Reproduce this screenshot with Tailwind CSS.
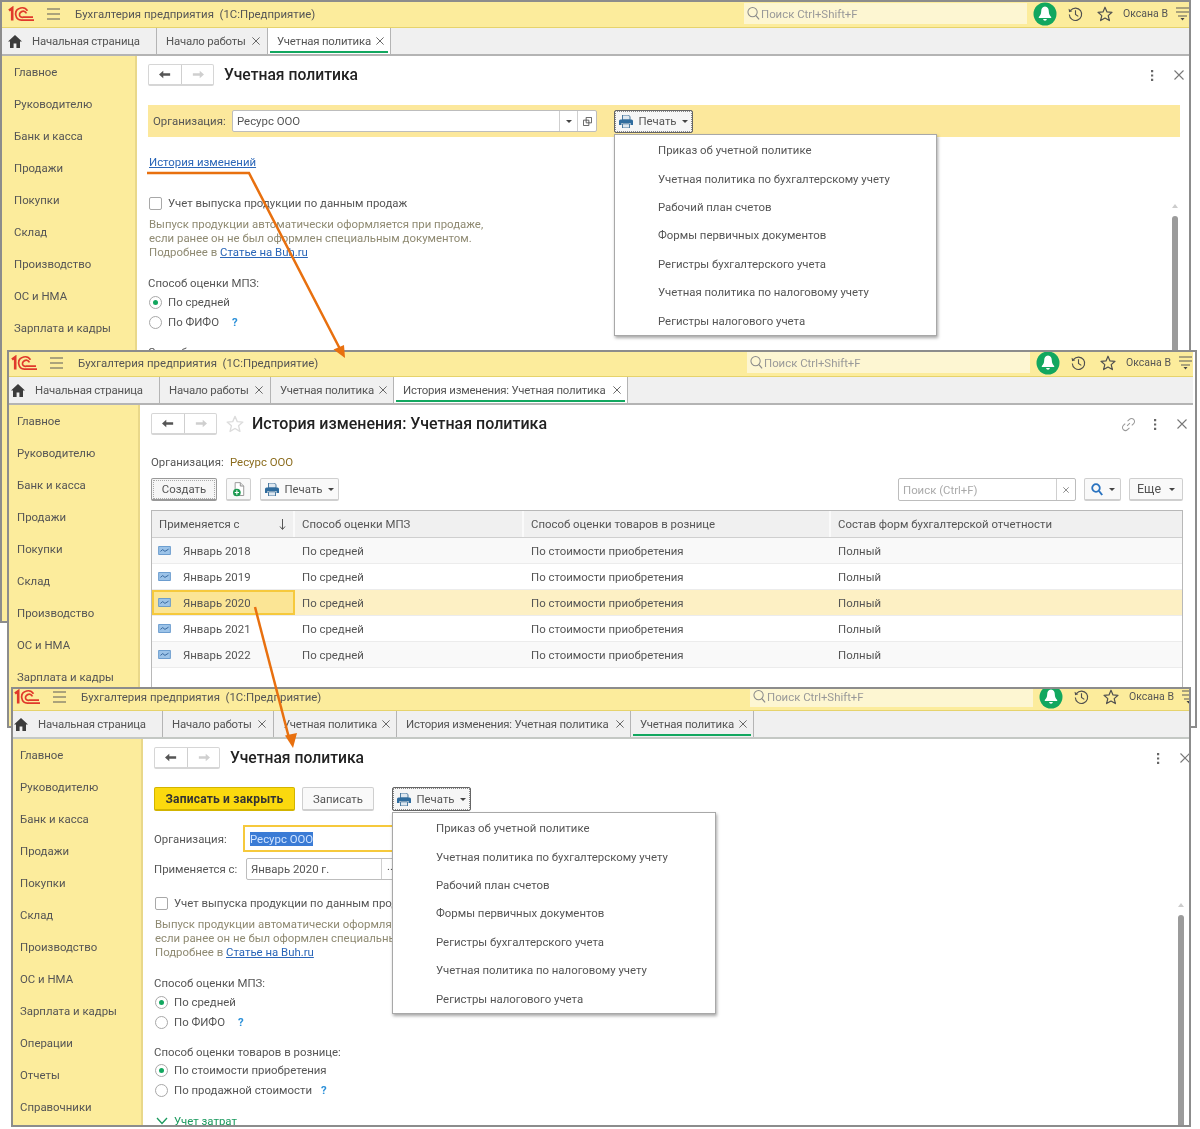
<!DOCTYPE html>
<html lang="ru">
<head>
<meta charset="UTF-8">
<title>Учетная политика</title>
<script src="https://cdn.jsdelivr.net/npm/@tailwindcss/browser@4"></script>
</head>
<body class="bg-white">

<!-- общие иконки -->
<svg class="hidden">
  <symbol id="logo" viewBox="0 0 26 16">
    <path d="M1 4.5 4.2 2.2V14.5" fill="none" stroke="#e0392b" stroke-width="2.6"/>
    <path d="M19.5 4.8C18 2.4 15 1.4 12.6 2 8.8 3 7.2 6 7.8 9.2 8.4 12.4 11 14.4 14 14.2H26" fill="none" stroke="#e0392b" stroke-width="1.7"/>
    <path d="M18.5 7.4C17.3 5.4 15 5 13.6 5.6 11.4 6.6 11 9 12 10.3 13 11.6 14.4 11.4 15.4 11.2H25" fill="none" stroke="#e0392b" stroke-width="1.7"/>
  </symbol>
  <symbol id="menu" viewBox="0 0 14 12">
    <path d="M0 1h13M0 6h13M0 11h13" stroke="#5a5a5a" stroke-width="1.2"/>
  </symbol>
  <symbol id="menu-down" viewBox="0 0 14 14">
    <path d="M0 1h13M0 5h13M2 9h9" stroke="#5a5a5a" stroke-width="1.2"/><path d="M4.5 11h4L6.5 13.5z" fill="#444"/>
  </symbol>
  <symbol id="home" viewBox="0 0 14 13">
    <path d="M7 0 0 6.5h2V13h3.6V8.6h2.8V13H12V6.500h2z" fill="#3c3c3c"/>
  </symbol>
  <symbol id="loupe" viewBox="0 0 14 15">
    <circle cx="6" cy="6" r="5" fill="none" stroke="#8a8a8a" stroke-width="1.1"/><path d="m9.600 9.800 3.400 4" stroke="#8a8a8a" stroke-width="1.3"/>
  </symbol>
  <symbol id="bell" viewBox="0 0 24 24">
    <circle cx="12" cy="12" r="11.500" fill="#12a75f"/>
    <path d="M12 4.500c-2.600 0-3.800 2.200-3.800 4.800 0 3-1.200 4.500-2.400 5.800v.9h12.400v-.9c-1.200-1.300-2.400-2.800-2.400-5.800 0-2.600-1.200-4.800-3.800-4.800z" fill="#fff"/>
    <path d="M10.200 17h3.600c0 2.200-3.600 2.200-3.600 0z" fill="#fff"/>
  </symbol>
  <symbol id="history" viewBox="0 0 16 16">
    <path d="M2.800 4.200A6.600 6.600 0 1 1 1.400 8.500" fill="none" stroke="#4f4f4f" stroke-width="1.200"/>
    <path d="M.6 2.400 1.200 6l3.400-1z" fill="#4f4f4f"/><path d="M8 4v4.500l3 2" fill="none" stroke="#4f4f4f" stroke-width="1.200"/>
  </symbol>
  <symbol id="star" viewBox="0 0 16 16">
    <path d="m8 1.200 2 4.700 5 .4-3.800 3.300 1.200 5L8 12l-4.400 2.600 1.200-5L1 6.300l5-.4z" fill="none" stroke="currentColor" stroke-width="1.200" stroke-linejoin="round"/>
  </symbol>
  <symbol id="back" viewBox="0 0 14 10">
    <path d="M0 5 5 .5v3h8v3H5v3z" fill="currentColor"/>
  </symbol>
  <symbol id="forward" viewBox="0 0 14 10">
    <path d="M14 5 9 .5v3H1v3h8v3z" fill="currentColor"/>
  </symbol>
  <symbol id="close" viewBox="0 0 10 10">
    <path d="m.5.5 9 9m0-9-9 9" stroke="currentColor" stroke-width="1.100"/>
  </symbol>
  <symbol id="dots" viewBox="0 0 3 11">
    <path d="M0 0h2.200v2.200H0zM0 4.400h2.200v2.200H0zM0 8.800h2.200V11H0z" fill="#666"/>
  </symbol>
  <symbol id="printer" viewBox="0 0 14 13">
    <path d="M3.500 0h6L11 1.800V5H3.500z" fill="#dfe8f0" stroke="#3b6d96" stroke-width=".9"/>
    <path d="M1.500 4.500h11A1.500 1.500 0 0 1 14 6v4h-2.500V8h-9v2H0V6a1.500 1.500 0 0 1 1.500-1.500z" fill="#2f6c9e"/>
    <path d="M3.500 8.800h7V13h-7z" fill="#dfe8f0" stroke="#3b6d96" stroke-width=".9"/>
  </symbol>
  <symbol id="copy" viewBox="0 0 10 10">
    <path d="M3.500.5h6v6h-6zM.5 3.500h6v6h-6z" fill="#fff" stroke="#555"/>
  </symbol>
  <symbol id="wave" viewBox="0 0 14 10">
    <path d="M.5.500h13v9H.5z" fill="#9cc3e8" stroke="#5c93c9"/>
    <path d="m2.500 6 2.500-2 2.500 2 4-2.500" fill="none" stroke="#2d5f96" stroke-width="1"/>
  </symbol>
  <symbol id="doc-plus" viewBox="0 0 14 17">
    <path d="M2.500.5h6l4 4v11h-10z" fill="#fff" stroke="#8a8a8a"/><path d="M8.500.5v4h4" fill="#dfdfdf" stroke="#8a8a8a"/>
    <circle cx="4.500" cy="12" r="4.500" fill="#1c9a50"/><path d="M4.500 9.500v5M2 12h5" stroke="#fff" stroke-width="1.300"/>
  </symbol>
  <symbol id="chain" viewBox="0 0 16 16">
    <path d="m6.500 9.500 3-3M7 4.500l2-2a2.900 2.900 0 0 1 4.500 4.500l-2 2M9 11.500l-2 2A2.900 2.900 0 0 1 2.500 9l2-2" fill="none" stroke="#9a9a9a" stroke-width="1.100"/>
  </symbol>
</svg>

<div class="relative w-[1200px] h-[1129px] overflow-hidden whitespace-nowrap text-[11.4px] leading-[14px] text-[#555] font-['Roboto','Liberation_Sans',Arial,sans-serif] blur-[0.4px]">

  <!-- окно 1 -->
  <section class="absolute left-0 top-0 w-[1191px] h-[623px] border-2 border-[#8c8c8c] bg-white overflow-hidden">
    <div class="w-[1188px] h-[800px] -mt-[2px] flex flex-col">
      <header class="h-[28px] shrink-0 flex items-center bg-[#fcec9c] border-b border-[#e6d36c]">
        <svg class="w-[26px] h-[16px] ml-[6px]"><use href="#logo"/></svg>
        <svg class="w-[14px] h-[12px] ml-[13px]"><use href="#menu"/></svg>
        <span class="ml-[14px] flex-1 whitespace-pre">Бухгалтерия предприятия  (1С:Предприятие)</span>
        <div class="w-[283px] h-[21px] flex items-center bg-[#fdf6d2] text-[#999] pl-[3px]"><svg class="w-[13px] h-[15px] mr-[1px]"><use href="#loupe"/></svg>Поиск Ctrl+Shift+F</div>
        <svg class="w-[24px] h-[24px] ml-[6px]"><use href="#bell"/></svg>
        <svg class="w-[15px] h-[16px] ml-[11px]"><use href="#history"/></svg>
        <svg class="w-[16px] h-[16px] ml-[14px] text-[#4f4f4f]"><use href="#star"/></svg>
        <span class="ml-[10px] w-[53px] text-[10.5px]">Оксана В</span>
        <svg class="w-[14px] h-[14px]"><use href="#menu-down"/></svg>
      </header>
      <nav class="h-[28px] shrink-0 flex bg-[#f0f0f0] border-b-2 border-[#b4b4b4] tracking-[-0.2px]">
        <div class="w-[155px] flex items-center border-r border-[#b4b4b4]"><svg class="w-[14px] h-[13px] ml-[6px]"><use href="#home"/></svg><span class="ml-[10px]">Начальная страница</span></div>
        <div class="w-[111px] flex items-center border-r border-[#b4b4b4] pl-[9px]"><span class="flex-1">Начало работы</span><svg class="w-[8px] h-[8px] mr-[7px]"><use href="#close"/></svg></div>
        <div class="w-[123px] relative flex items-center border-r border-[#b4b4b4] bg-white pl-[9px]"><span class="flex-1">Учетная политика</span><svg class="w-[8px] h-[8px] mr-[6px]"><use href="#close"/></svg><i class="absolute left-[2px] right-[2px] bottom-[1px] h-[2px] bg-[#12a75f]"></i></div>
      </nav>
      <div class="flex-1 flex">
        <aside class="w-[135px] shrink-0 bg-[#fcec9c] border-r-2 border-[#e9d88a] pl-[12px]">
          <div class="h-[32px] flex items-center">Главное</div>
          <div class="h-[32px] flex items-center">Руководителю</div>
          <div class="h-[32px] flex items-center">Банк и касса</div>
          <div class="h-[32px] flex items-center">Продажи</div>
          <div class="h-[32px] flex items-center">Покупки</div>
          <div class="h-[32px] flex items-center">Склад</div>
          <div class="h-[32px] flex items-center">Производство</div>
          <div class="h-[32px] flex items-center">ОС и НМА</div>
          <div class="h-[32px] flex items-center">Зарплата и кадры</div>
        </aside>
        <main class="relative flex-1 pl-[11px]">
          <div class="mt-[8px] h-[22px] flex items-center">
            <div class="w-[66px] h-[22px] flex border border-[#d6d6d6] border-b-2 rounded-[2px]">
              <div class="w-[33px] flex items-center justify-center border-r border-[#cfcfcf] text-[#555]"><svg class="w-[12px] h-[9px]"><use href="#back"/></svg></div>
              <div class="flex-1 flex items-center justify-center text-[#cfcfcf]"><svg class="w-[12px] h-[9px]"><use href="#forward"/></svg></div>
            </div>
            <h1 class="ml-[10px] text-[15.7px] font-medium text-[#222]">Учетная политика</h1>
          </div>
          <div class="mt-[19px] h-[32px] w-[1032px] flex items-center bg-[#fce89c] pl-[5px]">
            <span class="w-[79px]">Организация:</span>
            <div class="w-[365px] h-[22px] flex items-center bg-white border border-[#bdbdbd] rounded-[2px]">
              <span class="flex-1 pl-[4px]">Ресурс ООО</span>
              <span class="w-[18px] h-full flex items-center justify-center border-l border-[#cfcfcf]"><i class="border-x-[3px] border-t-[3px] border-x-transparent border-t-[#444]"></i></span>
              <span class="w-[19px] h-full flex items-center justify-center border-l border-[#cfcfcf]"><svg class="w-[9px] h-[9px]"><use href="#copy"/></svg></span>
            </div>
            <div class="ml-[17px] w-[79px] h-[23px] flex items-center justify-center gap-[5px] bg-[#f6f6f6] border border-[#666] outline-1 outline-dotted -outline-offset-2 outline-[#888] rounded-[2px]">
              <svg class="w-[14px] h-[13px]"><use href="#printer"/></svg>Печать<i class="border-x-[3px] border-t-[3px] border-x-transparent border-t-[#444]"></i>
            </div>
          </div>
          <a class="block mt-[17px] ml-[1px] h-[16px] leading-[16px] text-[#2a66b8] underline">История изменений</a>
          <div class="mt-[26px] ml-[1px] flex items-center gap-[6px] h-[14px]"><i class="w-[13px] h-[13px] bg-white border border-[#a8a8a8] rounded-[2px]"></i>Учет выпуска продукции по данным продаж</div>
          <p class="mt-[7px] ml-[1px] text-[#8f8a72]">Выпуск продукции автоматически оформляется при продаже,<br>если ранее он не был оформлен специальным документом.<br>Подробнее в <a class="text-[#2a66b8] underline">Статье на Buh.ru</a></p>
          <div class="mt-[17px] h-[14px]">Способ оценки МПЗ:</div>
          <div class="mt-[2px] ml-[1px] h-[20px] flex items-center gap-[6px]"><i class="w-[13px] h-[13px] flex items-center justify-center bg-white border border-[#a8a8a8] rounded-full"><b class="w-[5px] h-[5px] bg-[#12a75f] rounded-full"></b></i>По средней</div>
          <div class="ml-[1px] h-[20px] flex items-center gap-[6px]"><i class="w-[13px] h-[13px] bg-white border border-[#a8a8a8] rounded-full"></i>По ФИФО<span class="ml-[7px] text-[#2a8fd8] font-bold">?</span></div>
          <div class="mt-[13px] h-[6px] overflow-hidden">Способ оценки товаров в рознице:</div>

          <div class="absolute left-[477px] top-[78px] w-[323px] h-[202px] bg-white border border-[#a8a8a8] shadow-[1px_2px_3px_rgba(0,0,0,0.35)] pt-[1px] pl-[43px]">
            <div class="h-[28.4px] flex items-center">Приказ об учетной политике</div>
            <div class="h-[28.4px] flex items-center">Учетная политика по бухгалтерскому учету</div>
            <div class="h-[28.4px] flex items-center">Рабочий план счетов</div>
            <div class="h-[28.4px] flex items-center">Формы первичных документов</div>
            <div class="h-[28.4px] flex items-center">Регистры бухгалтерского учета</div>
            <div class="h-[28.4px] flex items-center">Учетная политика по налоговому учету</div>
            <div class="h-[28.4px] flex items-center">Регистры налогового учета</div>
          </div>
          <svg class="absolute left-[1014px] top-[14px] w-[3px] h-[11px]"><use href="#dots"/></svg>
          <svg class="absolute left-[1037px] top-[14px] w-[10px] h-[10px] text-[#777]"><use href="#close"/></svg>
          <i class="absolute left-[1035px] top-[148px] border-x-[3px] border-b-[4px] border-x-transparent border-b-[#ccc]"></i>
          <i class="absolute left-[1035px] top-[160px] w-[6px] h-[300px] bg-[#9b9b9b] rounded-t-[3px]"></i>
        </main>
      </div>
    </div>
  </section>

  <!-- окно 2 -->
  <section class="absolute left-[7px] top-[350px] w-[1190px] h-[378px] border-2 border-[#8c8c8c] bg-white overflow-hidden">
    <div class="w-[1188px] h-[800px] -ml-[4px] -mt-[3px] flex flex-col">
      <header class="h-[28px] shrink-0 flex items-center bg-[#fcec9c] border-b border-[#e6d36c]">
        <svg class="w-[26px] h-[16px] ml-[6px]"><use href="#logo"/></svg>
        <svg class="w-[14px] h-[12px] ml-[13px]"><use href="#menu"/></svg>
        <span class="ml-[14px] flex-1 whitespace-pre">Бухгалтерия предприятия  (1С:Предприятие)</span>
        <div class="w-[283px] h-[21px] flex items-center bg-[#fdf6d2] text-[#999] pl-[3px]"><svg class="w-[13px] h-[15px] mr-[1px]"><use href="#loupe"/></svg>Поиск Ctrl+Shift+F</div>
        <svg class="w-[24px] h-[24px] ml-[6px]"><use href="#bell"/></svg>
        <svg class="w-[15px] h-[16px] ml-[11px]"><use href="#history"/></svg>
        <svg class="w-[16px] h-[16px] ml-[14px] text-[#4f4f4f]"><use href="#star"/></svg>
        <span class="ml-[10px] w-[53px] text-[10.5px]">Оксана В</span>
        <svg class="w-[14px] h-[14px]"><use href="#menu-down"/></svg>
      </header>
      <nav class="h-[28px] shrink-0 flex bg-[#f0f0f0] border-b-2 border-[#b4b4b4] tracking-[-0.2px]">
        <div class="w-[155px] flex items-center border-r border-[#b4b4b4]"><svg class="w-[14px] h-[13px] ml-[6px]"><use href="#home"/></svg><span class="ml-[10px]">Начальная страница</span></div>
        <div class="w-[111px] flex items-center border-r border-[#b4b4b4] pl-[9px]"><span class="flex-1">Начало работы</span><svg class="w-[8px] h-[8px] mr-[7px]"><use href="#close"/></svg></div>
        <div class="w-[123px] flex items-center border-r border-[#b4b4b4] pl-[9px]"><span class="flex-1">Учетная политика</span><svg class="w-[8px] h-[8px] mr-[6px]"><use href="#close"/></svg></div>
        <div class="w-[234px] relative flex items-center border-r border-[#b4b4b4] bg-white pl-[9px]"><span class="flex-1">История изменения: Учетная политика</span><svg class="w-[8px] h-[8px] mr-[6px]"><use href="#close"/></svg><i class="absolute left-[2px] right-[2px] bottom-[1px] h-[2px] bg-[#12a75f]"></i></div>
      </nav>
      <div class="flex-1 flex">
        <aside class="w-[135px] shrink-0 bg-[#fcec9c] border-r-2 border-[#e9d88a] pl-[12px]">
          <div class="h-[32px] flex items-center">Главное</div>
          <div class="h-[32px] flex items-center">Руководителю</div>
          <div class="h-[32px] flex items-center">Банк и касса</div>
          <div class="h-[32px] flex items-center">Продажи</div>
          <div class="h-[32px] flex items-center">Покупки</div>
          <div class="h-[32px] flex items-center">Склад</div>
          <div class="h-[32px] flex items-center">Производство</div>
          <div class="h-[32px] flex items-center">ОС и НМА</div>
          <div class="h-[32px] flex items-center">Зарплата и кадры</div>
        </aside>
        <main class="relative flex-1 pl-[11px]">
          <div class="mt-[8px] h-[22px] flex items-center">
            <div class="w-[66px] h-[22px] flex border border-[#d6d6d6] border-b-2 rounded-[2px]">
              <div class="w-[33px] flex items-center justify-center border-r border-[#cfcfcf] text-[#555]"><svg class="w-[12px] h-[9px]"><use href="#back"/></svg></div>
              <div class="flex-1 flex items-center justify-center text-[#cfcfcf]"><svg class="w-[12px] h-[9px]"><use href="#forward"/></svg></div>
            </div>
            <svg class="ml-[9px] w-[18px] h-[18px] text-[#dcdcdc]"><use href="#star"/></svg>
            <h1 class="ml-[8px] text-[16px] font-medium text-[#222]">История изменения: Учетная политика</h1>
          </div>
          <div class="mt-[20px] h-[14px] flex"><span class="w-[79px]">Организация:</span><span class="text-[#8c6d1f]">Ресурс ООО</span></div>
          <div class="mt-[9px] h-[23px] w-[1032px] flex items-stretch">
            <div class="w-[66px] flex items-center justify-center bg-[#f6f6f6] border border-[#999] border-b-2 outline-1 outline-dotted -outline-offset-3 outline-[#aaa] rounded-[2px]">Создать</div>
            <div class="ml-[9px] w-[25px] flex items-center justify-center bg-[#f9f9f9] border border-[#cfcfcf] border-b-2 rounded-[2px]"><svg class="w-[12px] h-[15px]"><use href="#doc-plus"/></svg></div>
            <div class="ml-[9px] w-[79px] flex items-center justify-center gap-[5px] bg-[#f9f9f9] border border-[#cfcfcf] border-b-2 rounded-[2px]"><svg class="w-[14px] h-[13px]"><use href="#printer"/></svg>Печать<i class="border-x-[3px] border-t-[3px] border-x-transparent border-t-[#444]"></i></div>
            <div class="ml-auto w-[178px] flex bg-white border border-[#bdbdbd] rounded-[2px]">
              <span class="flex-1 flex items-center pl-[4px] text-[#aaa]">Поиск (Ctrl+F)</span>
              <span class="w-[19px] flex items-center justify-center border-l border-[#cfcfcf]"><svg class="w-[6px] h-[6px] text-[#555]"><use href="#close"/></svg></span>
            </div>
            <div class="ml-[8px] w-[37px] flex items-center justify-center gap-[6px] bg-[#f9f9f9] border border-[#cfcfcf] border-b-2 rounded-[2px]">
              <svg class="w-[12px] h-[13px]" viewBox="0 0 12 13"><circle cx="5" cy="5" r="3.800" fill="none" stroke="#2a73c0" stroke-width="1.800"/><path d="m8 8 3.200 4" stroke="#2a73c0" stroke-width="2"/></svg>
              <i class="border-x-[3px] border-t-[3px] border-x-transparent border-t-[#444]"></i>
            </div>
            <div class="ml-[8px] w-[54px] flex items-center justify-center gap-[8px] bg-[#f9f9f9] border border-[#cfcfcf] border-b-2 rounded-[2px] text-[12.500px]">Еще<i class="border-x-[3px] border-t-[3px] border-x-transparent border-t-[#444]"></i></div>
          </div>
          <div class="mt-[9px] w-[1032px] h-[400px] border border-[#b8b8b8] border-b-0">
            <div class="grid grid-cols-[143px_229px_307px_1fr] h-[27px] bg-[#f0f0f0] border-b border-[#cfcfcf]">
              <div class="flex items-center pl-[7px] pr-[7px] border-r-2 border-[#fafafa]"><span class="flex-1">Применяется с</span><svg class="w-[7px] h-[11px]" viewBox="0 0 7 11"><path d="M3.500 0v10M1 7.500 3.500 10.500 6 7.500" fill="none" stroke="#555"/></svg></div>
              <div class="flex items-center pl-[7px] border-r-2 border-[#fafafa]">Способ оценки МПЗ</div>
              <div class="flex items-center pl-[7px] border-r-2 border-[#fafafa]">Способ оценки товаров в рознице</div>
              <div class="flex items-center pl-[7px]">Состав форм бухгалтерской отчетности</div>
            </div>
            <div class="grid grid-cols-[143px_229px_307px_1fr] h-[26px] bg-[#f9f9f9] border-b border-[#ececec]">
              <div class="flex items-center pl-[6px] gap-[12px]"><svg class="w-[13px] h-[9px]"><use href="#wave"/></svg>Январь 2018</div>
              <div class="flex items-center pl-[7px]">По средней</div>
              <div class="flex items-center pl-[7px]">По стоимости приобретения</div>
              <div class="flex items-center pl-[7px]">Полный</div>
            </div>
            <div class="grid grid-cols-[143px_229px_307px_1fr] h-[26px] bg-white border-b border-[#ececec]">
              <div class="flex items-center pl-[6px] gap-[12px]"><svg class="w-[13px] h-[9px]"><use href="#wave"/></svg>Январь 2019</div>
              <div class="flex items-center pl-[7px]">По средней</div>
              <div class="flex items-center pl-[7px]">По стоимости приобретения</div>
              <div class="flex items-center pl-[7px]">Полный</div>
            </div>
            <div class="grid grid-cols-[143px_229px_307px_1fr] h-[26px] bg-[#fdf0c4] border-b border-[#ececec]">
              <div class="flex items-center pl-[4px] gap-[12px] bg-[#fbe595] border-2 border-[#f6c93c]"><svg class="w-[13px] h-[9px]"><use href="#wave"/></svg>Январь 2020</div>
              <div class="flex items-center pl-[7px]">По средней</div>
              <div class="flex items-center pl-[7px]">По стоимости приобретения</div>
              <div class="flex items-center pl-[7px]">Полный</div>
            </div>
            <div class="grid grid-cols-[143px_229px_307px_1fr] h-[26px] bg-white border-b border-[#ececec]">
              <div class="flex items-center pl-[6px] gap-[12px]"><svg class="w-[13px] h-[9px]"><use href="#wave"/></svg>Январь 2021</div>
              <div class="flex items-center pl-[7px]">По средней</div>
              <div class="flex items-center pl-[7px]">По стоимости приобретения</div>
              <div class="flex items-center pl-[7px]">Полный</div>
            </div>
            <div class="grid grid-cols-[143px_229px_307px_1fr] h-[26px] bg-[#f9f9f9] border-b border-[#ececec]">
              <div class="flex items-center pl-[6px] gap-[12px]"><svg class="w-[13px] h-[9px]"><use href="#wave"/></svg>Январь 2022</div>
              <div class="flex items-center pl-[7px]">По средней</div>
              <div class="flex items-center pl-[7px]">По стоимости приобретения</div>
              <div class="flex items-center pl-[7px]">Полный</div>
            </div>
          </div>
          <svg class="absolute left-[981px] top-[12px] w-[15px] h-[15px]"><use href="#chain"/></svg>
          <svg class="absolute left-[1014px] top-[14px] w-[3px] h-[11px]"><use href="#dots"/></svg>
          <svg class="absolute left-[1037px] top-[14px] w-[10px] h-[10px] text-[#777]"><use href="#close"/></svg>
        </main>
      </div>
    </div>
  </section>

  <!-- окно 3 -->
  <section class="absolute left-[11px] top-[687px] w-[1180px] h-[440px] border-2 border-[#8c8c8c] bg-white overflow-hidden">
    <div class="w-[1188px] h-[800px] -ml-[5px] -mt-[6px] flex flex-col">
      <header class="h-[28px] shrink-0 flex items-center bg-[#fcec9c] border-b border-[#e6d36c]">
        <svg class="w-[26px] h-[16px] ml-[6px]"><use href="#logo"/></svg>
        <svg class="w-[14px] h-[12px] ml-[13px]"><use href="#menu"/></svg>
        <span class="ml-[14px] flex-1 whitespace-pre">Бухгалтерия предприятия  (1С:Предприятие)</span>
        <div class="w-[283px] h-[21px] flex items-center bg-[#fdf6d2] text-[#999] pl-[3px]"><svg class="w-[13px] h-[15px] mr-[1px]"><use href="#loupe"/></svg>Поиск Ctrl+Shift+F</div>
        <svg class="w-[24px] h-[24px] ml-[6px]"><use href="#bell"/></svg>
        <svg class="w-[15px] h-[16px] ml-[11px]"><use href="#history"/></svg>
        <svg class="w-[16px] h-[16px] ml-[14px] text-[#4f4f4f]"><use href="#star"/></svg>
        <span class="ml-[10px] w-[53px] text-[10.5px]">Оксана В</span>
        <svg class="w-[14px] h-[14px]"><use href="#menu-down"/></svg>
      </header>
      <nav class="h-[28px] shrink-0 flex bg-[#f0f0f0] border-b-2 border-[#c4c8c4] tracking-[-0.2px]">
        <div class="w-[155px] flex items-center border-r border-[#b4b4b4]"><svg class="w-[14px] h-[13px] ml-[6px]"><use href="#home"/></svg><span class="ml-[10px]">Начальная страница</span></div>
        <div class="w-[111px] flex items-center border-r border-[#b4b4b4] pl-[9px]"><span class="flex-1">Начало работы</span><svg class="w-[8px] h-[8px] mr-[7px]"><use href="#close"/></svg></div>
        <div class="w-[123px] flex items-center border-r border-[#b4b4b4] pl-[9px]"><span class="flex-1">Учетная политика</span><svg class="w-[8px] h-[8px] mr-[6px]"><use href="#close"/></svg></div>
        <div class="w-[234px] flex items-center border-r border-[#b4b4b4] pl-[9px]"><span class="flex-1">История изменения: Учетная политика</span><svg class="w-[8px] h-[8px] mr-[6px]"><use href="#close"/></svg></div>
        <div class="w-[123px] relative flex items-center border-r border-[#b4b4b4] pl-[9px]"><span class="flex-1">Учетная политика</span><svg class="w-[8px] h-[8px] mr-[6px]"><use href="#close"/></svg><i class="absolute left-[2px] right-[2px] bottom-[1px] h-[2px] bg-[#12a75f]"></i></div>
      </nav>
      <div class="flex-1 flex">
        <aside class="w-[135px] shrink-0 bg-[#fcec9c] border-r-2 border-[#e9d88a] pl-[12px]">
          <div class="h-[32px] flex items-center">Главное</div>
          <div class="h-[32px] flex items-center">Руководителю</div>
          <div class="h-[32px] flex items-center">Банк и касса</div>
          <div class="h-[32px] flex items-center">Продажи</div>
          <div class="h-[32px] flex items-center">Покупки</div>
          <div class="h-[32px] flex items-center">Склад</div>
          <div class="h-[32px] flex items-center">Производство</div>
          <div class="h-[32px] flex items-center">ОС и НМА</div>
          <div class="h-[32px] flex items-center">Зарплата и кадры</div>
          <div class="h-[32px] flex items-center">Операции</div>
          <div class="h-[32px] flex items-center">Отчеты</div>
          <div class="h-[32px] flex items-center">Справочники</div>
        </aside>
        <main class="relative flex-1 pl-[11px]">
          <div class="mt-[8px] h-[22px] flex items-center">
            <div class="w-[66px] h-[22px] flex border border-[#d6d6d6] border-b-2 rounded-[2px]">
              <div class="w-[33px] flex items-center justify-center border-r border-[#cfcfcf] text-[#555]"><svg class="w-[12px] h-[9px]"><use href="#back"/></svg></div>
              <div class="flex-1 flex items-center justify-center text-[#cfcfcf]"><svg class="w-[12px] h-[9px]"><use href="#forward"/></svg></div>
            </div>
            <h1 class="ml-[10px] text-[15.7px] font-medium text-[#222]">Учетная политика</h1>
          </div>
          <div class="mt-[18px] h-[24px] flex items-stretch">
            <div class="w-[141px] flex items-center justify-center bg-[#fbd90e] border border-[#d2b400] border-b-2 rounded-[2px] font-bold text-[12px] tracking-[0.2px] text-[#333]">Записать и закрыть</div>
            <div class="ml-[7px] w-[72px] flex items-center justify-center bg-[#f9f9f9] border border-[#cfcfcf] border-b-2 rounded-[2px]">Записать</div>
            <div class="ml-[18px] w-[79px] flex items-center justify-center gap-[5px] bg-[#f6f6f6] border border-[#666] outline-1 outline-dotted -outline-offset-2 outline-[#888] rounded-[2px]"><svg class="w-[14px] h-[13px]"><use href="#printer"/></svg>Печать<i class="border-x-[3px] border-t-[3px] border-x-transparent border-t-[#444]"></i></div>
          </div>
          <div class="mt-[14px] h-[27px] flex items-center">
            <span class="w-[89px]">Организация:</span>
            <div class="w-[300px] h-[27px] flex items-center bg-white border-2 border-[#f6c93c] pl-[5px]"><span class="bg-[#3a7bd5] text-[#cfe3ff]">Ресурс ООО</span></div>
          </div>
          <div class="mt-[6px] h-[22px] flex items-center">
            <span class="w-[92px]">Применяется с:</span>
            <div class="w-[300px] h-[22px] flex items-center bg-white border border-[#bdbdbd] rounded-[2px] pl-[4px]"><span class="w-[130px]">Январь 2020 г.</span><span class="h-full pl-[5px] border-l border-[#cfcfcf]">...</span></div>
          </div>
          <div class="mt-[16px] ml-[1px] w-[237px] overflow-hidden flex items-center gap-[6px] h-[14px]"><i class="w-[13px] h-[13px] shrink-0 bg-white border border-[#a8a8a8] rounded-[2px]"></i>Учет выпуска продукции по данным продаж</div>
          <p class="mt-[7px] ml-[1px] w-[237px] overflow-hidden text-[#8f8a72]">Выпуск продукции автоматически оформляется при продаже,<br>если ранее он не был оформлен специальным документом.<br>Подробнее в <a class="text-[#2a66b8] underline">Статье на Buh.ru</a></p>
          <div class="mt-[17px] h-[14px]">Способ оценки МПЗ:</div>
          <div class="mt-[2px] ml-[1px] h-[20px] flex items-center gap-[6px]"><i class="w-[13px] h-[13px] flex items-center justify-center bg-white border border-[#a8a8a8] rounded-full"><b class="w-[5px] h-[5px] bg-[#12a75f] rounded-full"></b></i>По средней</div>
          <div class="ml-[1px] h-[20px] flex items-center gap-[6px]"><i class="w-[13px] h-[13px] bg-white border border-[#a8a8a8] rounded-full"></i>По ФИФО<span class="ml-[7px] text-[#2a8fd8] font-bold">?</span></div>
          <div class="mt-[13px] h-[14px]">Способ оценки товаров в рознице:</div>
          <div class="mt-[1px] ml-[1px] h-[20px] flex items-center gap-[6px]"><i class="w-[13px] h-[13px] flex items-center justify-center bg-white border border-[#a8a8a8] rounded-full"><b class="w-[5px] h-[5px] bg-[#12a75f] rounded-full"></b></i>По стоимости приобретения</div>
          <div class="ml-[1px] h-[20px] flex items-center gap-[6px]"><i class="w-[13px] h-[13px] bg-white border border-[#a8a8a8] rounded-full"></i>По продажной стоимости<span class="ml-[3px] text-[#2a8fd8] font-bold">?</span></div>
          <div class="mt-[14px] ml-[2px] h-[14px] flex items-center gap-[6px] text-[#1b9a5e]"><svg class="w-[12px] h-[8px]" viewBox="0 0 12 8"><path d="m1 1 5 5.500L11 1" fill="none" stroke="#1b9a5e" stroke-width="1.300"/></svg>Учет затрат</div>

          <div class="absolute left-[249px] top-[73px] w-[324px] h-[202px] bg-white border border-[#a8a8a8] shadow-[1px_2px_3px_rgba(0,0,0,0.35)] pt-[1px] pl-[43px]">
            <div class="h-[28.4px] flex items-center">Приказ об учетной политике</div>
            <div class="h-[28.4px] flex items-center">Учетная политика по бухгалтерскому учету</div>
            <div class="h-[28.4px] flex items-center">Рабочий план счетов</div>
            <div class="h-[28.4px] flex items-center">Формы первичных документов</div>
            <div class="h-[28.4px] flex items-center">Регистры бухгалтерского учета</div>
            <div class="h-[28.4px] flex items-center">Учетная политика по налоговому учету</div>
            <div class="h-[28.4px] flex items-center">Регистры налогового учета</div>
          </div>
          <svg class="absolute left-[1014px] top-[14px] w-[3px] h-[11px]"><use href="#dots"/></svg>
          <svg class="absolute left-[1037px] top-[14px] w-[10px] h-[10px] text-[#777]"><use href="#close"/></svg>
          <i class="absolute left-[1035px] top-[164px] border-x-[3px] border-b-[4px] border-x-transparent border-b-[#ccc]"></i>
          <i class="absolute left-[1035px] top-[176px] w-[6px] h-[300px] bg-[#9b9b9b] rounded-t-[3px]"></i>
        </main>
      </div>
    </div>
  </section>

  <!-- стрелки -->
  <svg class="absolute left-0 top-0 w-[1200px] h-[1129px] pointer-events-none" viewBox="0 0 1200 1129">
    <path d="M147 173H249L340 349" fill="none" stroke="#e8700f" stroke-width="2.500"/>
    <path d="M345 358 333.500 349.500 344 345z" fill="#e8700f"/>
    <path d="M255 607 289 738" fill="none" stroke="#e8700f" stroke-width="2.500"/>
    <path d="M293 748 285 735.500 297 733z" fill="#e8700f"/>
  </svg>
</div>
</body>
</html>
